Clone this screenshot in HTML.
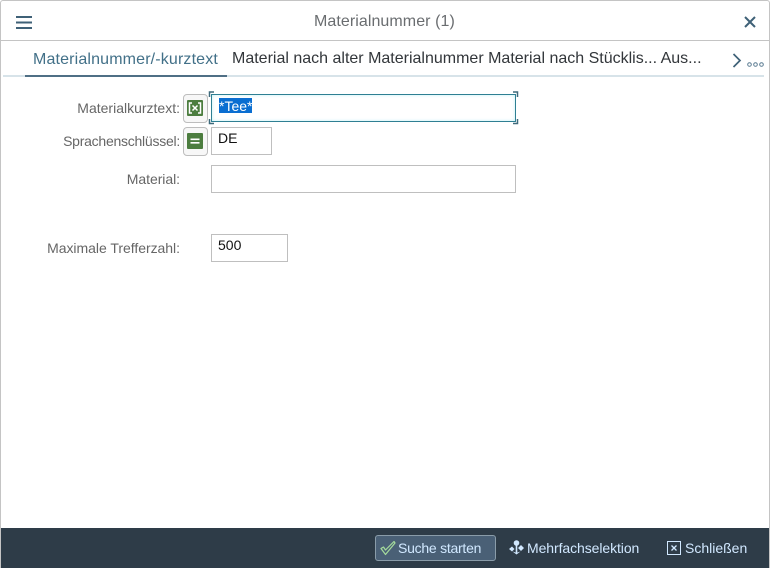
<!DOCTYPE html>
<html lang="de"><head><meta charset="utf-8"><title>Materialnummer (1)</title>
<style>
html,body{margin:0;padding:0;background:#fff}
#a{position:relative;width:770px;height:568px;overflow:hidden;background:#fff;font-family:"Liberation Sans",sans-serif}
#a div,#a span,#a svg{position:absolute}
.t{white-space:nowrap;line-height:20px}
.l{color:#666;font-size:14px;right:590px;text-align:right;white-space:nowrap;line-height:20px}
.i{box-sizing:border-box;background:#fff;border:1px solid #bfbfbf}
.v{font-size:14px;color:#111;line-height:18px;white-space:nowrap}
.b{box-sizing:border-box;width:25px;height:29px;background:#f7f7f7;border:1px solid #bdbdbd;border-radius:4px}
</style></head><body><div id="a">
<div style="left:0;top:0;width:768px;height:567px;border:1px solid #c4c4c4;border-radius:3px 3px 0 0;box-sizing:content-box"></div>
<div style="left:1px;top:40px;width:768px;height:1px;background:#c4c4c4"></div>

<svg style="left:16px;top:16px" width="16" height="13" viewBox="0 0 16 13"><path d="M0 1h16M0 6.500h16M0 12h16" stroke="#3f6177" stroke-width="2" fill="none"/></svg>
<div class="t" style="left:314px;top:12px;font-size:16px;color:#6a6d70;letter-spacing:.07px">Materialnummer (1)</div>
<svg style="left:744px;top:16px" width="12" height="12" viewBox="0 0 12 12"><path d="M1 1l10 10M11 1L1 11" stroke="#3f6177" stroke-width="2" fill="none"/></svg>

<div style="left:3px;top:75px;width:376px;height:2px;background:#d7e3e9"></div>
<div style="left:379px;top:75px;width:385px;height:2px;background:#d7e3e9"></div>
<div style="left:25px;top:75px;width:202px;height:2px;background:#4f6f85"></div>
<div class="t" style="left:33px;top:50px;font-size:16px;color:#427088;letter-spacing:.15px">Materialnummer/-kurztext</div>
<div class="t" style="left:232px;top:49px;font-size:16px;color:#32363a">Material nach alter Materialnummer Material nach Stücklis... Aus...</div>
<svg style="left:732px;top:53px" width="10" height="15" viewBox="0 0 10 15"><path d="M1.500 1l6.500 6.500L1.500 14" stroke="#3f6177" stroke-width="1.700" fill="none"/></svg>
<svg style="left:747px;top:61px" width="17" height="7" viewBox="0 0 17 7"><g fill="none" stroke="#5b7c92"><circle cx="2.500" cy="3.500" r="1.800"/><circle cx="8.500" cy="3.500" r="1.800"/><circle cx="14.500" cy="3.500" r="1.800"/></g></svg>

<div class="l" style="top:98px">Materialkurztext:</div>
<div class="l" style="top:131px;letter-spacing:-.25px">Sprachenschlüssel:</div>
<div class="l" style="top:169px;letter-spacing:-.05px">Material:</div>
<div class="l" style="top:238px;letter-spacing:-.03px">Maximale Trefferzahl:</div>

<div class="b" style="left:183px;top:94px"></div>
<div style="left:187px;top:100px;width:16px;height:16px;background:#4c7d3f;border-radius:1px"></div>
<svg style="left:187px;top:100px" width="16" height="16" viewBox="0 0 16 16"><path d="M5 3H2.500v10H5M11 3h2.500v10H11M5.500 5.500l5 5M10.500 5.500l-5 5" stroke="#fff" stroke-width="1.500" fill="none"/></svg>
<div class="b" style="left:183px;top:127px"></div>
<div style="left:187px;top:133px;width:16px;height:16px;background:#4c7d3f;border-radius:1px"></div>
<svg style="left:187px;top:133px" width="16" height="16" viewBox="0 0 16 16"><path d="M3.500 6.300h9M3.500 9.800h9" stroke="#fff" stroke-width="1.700" fill="none"/></svg>

<div style="box-sizing:border-box;left:211px;top:94px;width:305px;height:28px;border:1.500px solid #2f7f93;background:#fff;box-shadow:inset 0 0 3px #bff0f5"></div>
<svg style="left:208px;top:91px" width="311" height="34" viewBox="0 0 311 34"><path d="M6 1H1.500V6M1.500 28V32.500H6M305 1h4.500V6M309.500 28v4.500H305" fill="none" stroke="#3f6a7c" stroke-width="1.500"/></svg>
<div style="left:219px;top:98px;width:33px;height:15px;background:#0a6ed1"></div>
<div class="v" style="left:219px;top:97px;color:#fff">*Tee*</div>

<div class="i" style="left:211px;top:127px;width:61px;height:28px"></div>
<div class="v" style="left:218px;top:129px">DE</div>
<div class="i" style="left:211px;top:165px;width:305px;height:28px"></div>
<div class="i" style="left:211px;top:234px;width:77px;height:28px"></div>
<div class="v" style="left:218px;top:236px">500</div>

<div style="left:1px;top:528px;width:768px;height:40px;background:#2e3c48"></div>
<div style="box-sizing:border-box;left:375px;top:535px;width:121px;height:26px;background:#4a6076;border:1px solid #8a9ca9;border-radius:3px"></div>
<svg style="left:380px;top:540px" width="16" height="16" viewBox="0 0 16 16"><path d="M1 8.500L3.500 7 5.500 10 14 1.500 15 3 5.500 14.500z" fill="none" stroke="#a5dc9c" stroke-width="1.200" stroke-linejoin="round"/></svg>
<div class="t" style="left:398px;top:538px;font-size:14px;color:#d1e8ff;letter-spacing:-.25px">Suche starten</div>
<svg style="left:509px;top:540px" width="15" height="15" viewBox="0 0 15 15"><g fill="#d1e8ff"><circle cx="7.500" cy="3" r="2.800"/><path d="M0 9l3-2.500L5.500 9 3 11.500zM9 8l3-3 3 3-3 3z"/><rect x="6.700" y="5" width="1.600" height="8"/><path d="M3.500 11.500l4 3 4-3-4 1.200z"/></g></svg>
<div class="t" style="left:527px;top:538px;font-size:14px;color:#d1e8ff;letter-spacing:-.08px">Mehrfachselektion</div>
<svg style="left:667px;top:541px" width="14" height="14" viewBox="0 0 14 14"><rect x=".5" y=".5" width="13" height="13" fill="none" stroke="#d1e8ff"/><path d="M4.500 4.500l5 5M9.500 4.500l-5 5" stroke="#d1e8ff" stroke-width="1.300"/></svg>
<div class="t" style="left:685px;top:538px;font-size:14px;color:#d1e8ff">Schließen</div>
</div></body></html>
